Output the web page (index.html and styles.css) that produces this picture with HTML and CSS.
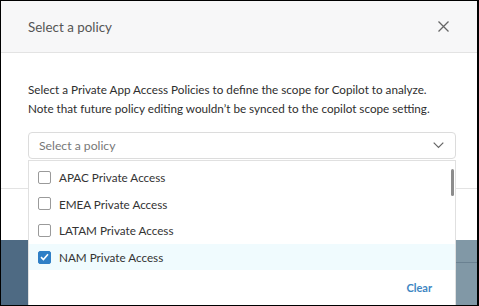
FILE: index.html
```html
<!DOCTYPE html>
<html lang="en">
<head>
  <meta charset="UTF-8">
  <title>Select a policy</title>
  <link rel="stylesheet" href="styles.css">
</head>
<body>

  <div class="screen">
    <!-- page behind the modal -->
    <div class="backdrop">
      <div class="backdrop-left"></div>
      <div class="backdrop-right"><div class="backdrop-line"></div></div>
    </div>

    <!-- Modal -->
    <div class="modal">
      <div class="modal-header">
        <h2 class="modal-title">Select a policy</h2>
        <button class="close-btn" aria-label="Close">
          <svg width="11" height="11" viewBox="0 0 11 11">
            <path d="M0.5 0.5 L10.5 10.5 M10.5 0.5 L0.5 10.5" stroke="#666" stroke-width="1.3" fill="none"/>
          </svg>
        </button>
      </div>

      <div class="modal-body">
        <p class="description">Select a Private App Access Policies to define the scope for Copilot to analyze.<br>Note that future policy editing wouldn’t be synced to the copilot scope setting.</p>

        <div class="select">
          <div class="select-box">
            <span class="placeholder">Select a policy</span>
            <svg class="chevron" width="11" height="7" viewBox="0 0 11 7">
              <path d="M0.7 0.7 L5.5 5.5 L10.3 0.7" stroke="#666" stroke-width="1.2" fill="none"/>
            </svg>
          </div>

          <div class="select-menu">
            <ul class="options">
              <li class="option"><span class="checkbox"></span>APAC Private Access</li>
              <li class="option"><span class="checkbox"></span>EMEA Private Access</li>
              <li class="option"><span class="checkbox"></span>LATAM Private Access</li>
              <li class="option selected">
                <span class="checkbox checked">
                  <svg width="9" height="8" viewBox="0 0 9 8">
                    <path d="M1 4.2 L3.4 6.5 L8 1.3" stroke="white" stroke-width="1.6" fill="none"/>
                  </svg>
                </span>NAM Private Access
              </li>
            </ul>
            <div class="menu-footer">
              <button class="clear-btn">Clear</button>
            </div>
            <div class="scrollbar"></div>
          </div>
        </div>
      </div>

      <div class="modal-footer"></div>
    </div>
  </div>

</body>
</html>
```

FILE: styles.css
```css
body {
  margin: 0;
  background-color: #000;
  font-family: Lato, "Open Sans", sans-serif;
}

.screen {
  position: relative;
  width: 476px;
  height: 304px;
  margin: 1px 2px 1px 1px;
  overflow: hidden;
  background-color: #fff;
}

.backdrop {
  position: absolute;
  left: 0;
  right: 0;
  top: 0;
  bottom: 0;
  display: flex;
}

.backdrop-left {
  flex: 1;
  background-color: #4e6a83;
}

.backdrop-right {
  flex: 1;
  background-color: #8198a6;
  padding-top: 261px;
}

.backdrop-line {
  height: 1px;
  background-color: #6a8191;
}

.modal {
  position: relative;
  height: 239px;
  background-color: #fff;
  display: flex;
  flex-direction: column;
}

.modal-header {
  height: 51px;
  background-color: #f7f7f8;
  border-bottom: 1px solid #e3e3e3;
  display: flex;
  align-items: center;
  justify-content: space-between;
  padding: 0 28px 0 27px;
}

.modal-title {
  margin: 0;
  font-size: 13.4px;
  font-weight: normal;
  color: #555;
}

.close-btn {
  border: none;
  background: none;
  padding: 0;
  display: flex;
  cursor: pointer;
}

.modal-body {
  padding: 27px 20px 0 27px;
  height: 108px;
}

.description {
  margin: 0;
  font-size: 11.7px;
  line-height: 19px;
  color: #2e2e2e;
  white-space: nowrap;
}

.select {
  position: relative;
  margin-top: 14px;
  width: 428px;
}

.select-box {
  height: 25px;
  border: 1px solid #dcdcdc;
  border-radius: 4px;
  display: flex;
  align-items: center;
  justify-content: space-between;
  padding: 0 11px 0 10px;
}

.placeholder {
  font-size: 12.2px;
  color: #777;
}

.select-menu {
  position: absolute;
  top: 28px;
  left: 0;
  width: 426px;
  height: 160px;
  background-color: #fff;
  border: 1px solid #e0e0e0;
  z-index: 10;
}

.options {
  list-style: none;
  margin: 0;
  padding: 3px 0 0;
}

.option {
  height: 26.6px;
  display: flex;
  align-items: center;
  padding-left: 9px;
  font-size: 11.7px;
  color: #333;
}

.option.selected {
  background-color: #f0fbfe;
}

.checkbox {
  width: 11px;
  height: 11px;
  border: 1px solid #9a9a9a;
  border-radius: 2px;
  margin-right: 8px;
  display: flex;
  align-items: center;
  justify-content: center;
}

.checkbox.checked {
  background-color: #2f7fc6;
  border-color: #2f7fc6;
}

.menu-footer {
  display: flex;
  justify-content: flex-end;
  padding: 11px 23px 0 0;
}

.clear-btn {
  border: none;
  background: none;
  padding: 0;
  font-family: inherit;
  font-size: 11px;
  font-weight: bold;
  color: #3e86c3;
  cursor: pointer;
}

.scrollbar {
  position: absolute;
  top: 8px;
  right: 1px;
  width: 3px;
  height: 27px;
  border-radius: 2px;
  background-color: #8c8c8c;
}

.modal-footer {
  flex: 1;
  border-top: 1px solid #e3e3e3;
}
```
